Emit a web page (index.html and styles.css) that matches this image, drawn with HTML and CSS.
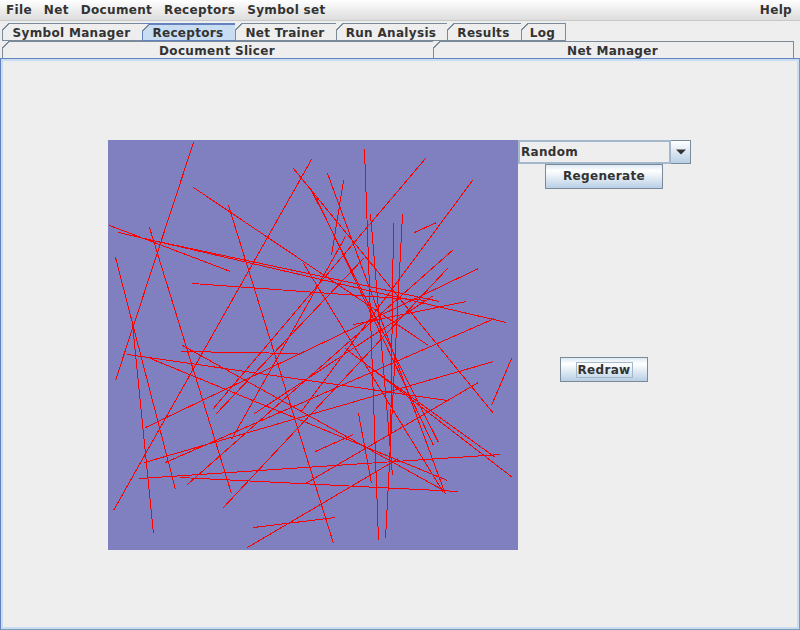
FILE: index.html
```html
<!DOCTYPE html>
<html lang="en">
<head>
<meta charset="utf-8">
<title>Receptors</title>
<link rel="stylesheet" href="styles.css">
</head>
<body>
<div class="app">
  <nav class="menubar">
    <span class="menu">File</span><span class="menu">Net</span><span class="menu">Document</span><span class="menu">Receptors</span><span class="menu">Symbol set</span>
    <span class="menu help">Help</span>
  </nav>
  <div class="tabrow first">
    <div class="tab t1">Symbol Manager</div>
    <div class="tab t2 active">Receptors</div>
    <div class="tab t3">Net Trainer</div>
    <div class="tab t4">Run Analysis</div>
    <div class="tab t5">Results</div>
    <div class="tab t6">Log</div>
  </div>
  <div class="tabrow second">
    <div class="tab w1">Document Slicer</div>
    <div class="tab w2">Net Manager</div>
  </div>
  <main class="panel">
    <svg class="canvas" width="410" height="410" viewBox="107.5 139.5 410 410" shape-rendering="crispEdges">
      <line x1="193" y1="142" x2="115" y2="380"/>
      <line x1="193" y1="187" x2="428" y2="345"/>
      <line x1="109" y1="225" x2="230" y2="271"/>
      <line x1="118" y1="232" x2="506" y2="322"/>
      <line x1="143" y1="238" x2="439" y2="301"/>
      <line x1="115" y1="257" x2="175" y2="489"/>
      <line x1="149" y1="227" x2="231" y2="493"/>
      <line x1="228" y1="205" x2="333" y2="543"/>
      <line x1="311" y1="159" x2="113" y2="510"/>
      <line x1="192" y1="283" x2="427" y2="300"/>
      <line x1="293" y1="168" x2="493" y2="413"/>
      <line x1="511" y1="358" x2="491" y2="405"/>
      <line x1="144" y1="462" x2="493" y2="361"/>
      <line x1="165" y1="462" x2="494" y2="318"/>
      <line x1="305" y1="483" x2="478" y2="382"/>
      <line x1="247" y1="547" x2="398" y2="458"/>
      <line x1="139" y1="478" x2="500" y2="454"/>
      <line x1="345" y1="348" x2="512" y2="477"/>
      <line x1="367" y1="365" x2="495" y2="457"/>
      <line x1="182" y1="345" x2="445" y2="491"/>
      <line x1="150" y1="358" x2="447" y2="480"/>
      <line x1="127" y1="354" x2="447" y2="400"/>
      <line x1="180" y1="477" x2="458" y2="491"/>
      <line x1="327" y1="173" x2="445" y2="494"/>
      <line x1="303" y1="263" x2="443" y2="492"/>
      <line x1="222" y1="508" x2="447" y2="268"/>
      <line x1="187" y1="484" x2="453" y2="249"/>
      <line x1="425" y1="158" x2="212" y2="409"/>
      <line x1="215" y1="414" x2="363" y2="258"/>
      <line x1="472" y1="180" x2="300" y2="412"/>
      <line x1="231" y1="439" x2="345" y2="236"/>
      <line x1="254" y1="413" x2="433" y2="295"/>
      <line x1="145" y1="427" x2="478" y2="268"/>
      <line x1="353" y1="324" x2="466" y2="301"/>
      <line x1="181" y1="351" x2="298" y2="353"/>
      <line x1="132" y1="323" x2="153" y2="533"/>
      <line x1="364" y1="149" x2="378" y2="540"/>
      <line x1="385" y1="538" x2="402" y2="214"/>
      <line x1="393" y1="223" x2="390" y2="447"/>
      <line x1="370" y1="214" x2="392" y2="475"/>
      <line x1="358" y1="413" x2="371" y2="483"/>
      <line x1="353" y1="434" x2="315" y2="451"/>
      <line x1="414" y1="232" x2="436" y2="222"/>
      <line x1="335" y1="517" x2="253" y2="527"/>
      <line x1="343" y1="180" x2="331" y2="255"/>
      <line x1="316" y1="198" x2="433" y2="445"/>
      <line x1="310" y1="188" x2="438" y2="442"/>
    </svg>
    <div class="side">
      <div class="combo"><span class="combo-text">Random</span><span class="combo-arrow"><svg width="12" height="6" viewBox="0 0 12 6"><path class="arrow" d="M1 0.5H11L6 5.5Z"/></svg></span></div>
      <button class="btn regen" type="button">Regenerate</button>
      <button class="btn redraw" type="button"><span class="focus">Redraw</span></button>
    </div>
  </main>
</div>
</body>
</html>
```
FILE: styles.css
```css
html, body { margin: 0; padding: 0; }
body { background: #eeeeee; font: bold 12px/15px "DejaVu Sans", sans-serif; letter-spacing: 0.32px; color: #333333; }
.app { width: 800px; height: 630px; display: flex; flex-direction: column; overflow: hidden; }
.menubar { height: 20px; flex: none; display: flex; gap: 12px; align-items: center; padding: 0 8px 0 6px; background: linear-gradient(#ffffff, #f4f4f4 30%, #dddddd); border-bottom: 1px solid #c8c8c8; }
.help { margin-left: auto; }
.tabrow { display: flex; flex: none; height: 18px; }
.tabrow.first { margin-top: 2px; padding-left: 2px; }
.tabrow.second { padding-left: 2px; }
.tab { position: relative; box-sizing: border-box; height: 18px; padding-right: 2px; text-align: center; line-height: 19px; border: 1px solid #7a8a99; border-right: 0; background: #eeeeee; }
.tab::before { content: ""; position: absolute; left: -1px; top: -1px; width: 7px; height: 7px; background: linear-gradient(135deg, #eeeeee 0 45%, #7a8a99 45% 58%, transparent 58%); }
.t1 { width: 140px; } .t2 { width: 93px; } .t3 { width: 101px; } .t4 { width: 111px; } .t5 { width: 74px; } .t6 { width: 45px; border-right: 1px solid #7a8a99; }
.w1 { width: 431px; } .w2 { width: 361px; border-right: 1px solid #7a8a99; }
.tab.active { background: #c8ddf2; border-color: #6382bf; border-width: 2px 1px 1px 1px; line-height: 17px; }
.panel { flex: 1; margin-top: -1px; box-sizing: border-box; display: flex; align-items: flex-start; padding: 81px 0 0 107px; background: #eeeeee; border: 1px solid #7a9ab5; border-left-color: #6382bf; border-top-color: #6382bf; box-shadow: inset 0 0 0 2px #c8ddf2; position: relative; }
.canvas { flex: none; background: #8080c0; display: block; }
.canvas line { stroke: #ff0000; stroke-width: 1; }
.side { display: flex; flex-direction: column; align-items: flex-start; }
.combo { width: 173px; height: 24px; box-sizing: border-box; display: flex; }
.combo-text { flex: 1; box-sizing: border-box; border: 2px solid #a3b8cc; padding-left: 1px; line-height: 20px; }
.combo-arrow { width: 20px; box-sizing: border-box; display: flex; align-items: center; justify-content: center; border: 1px solid #7a8a99; border-left: 0; background: linear-gradient(#ffffff, #b8cfe5); }
.arrow { fill: #333333; }
.btn { font: inherit; letter-spacing: inherit; color: inherit; box-sizing: border-box; padding: 0; border: 1px solid #7a8a99; background: linear-gradient(#dde8f3, #ffffff 25%, #b8cfe5); display: block; }
.regen { width: 118px; height: 25px; margin: 0 0 0 27px; }
.redraw { width: 88px; height: 25px; margin: 168px 0 0 42px; }
.focus { display: inline-block; border: 1px solid #a3b8cc; padding: 0 1px; line-height: 14px; }
```
